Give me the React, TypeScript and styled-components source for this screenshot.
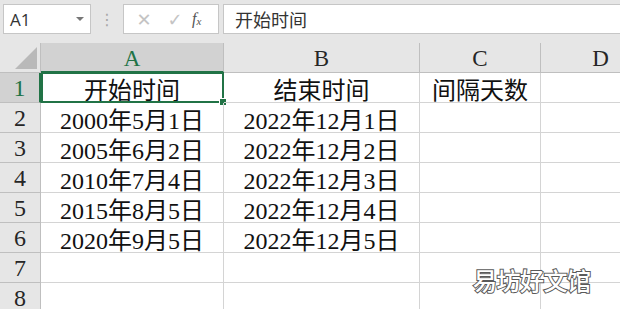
import styled, { createGlobalStyle } from "styled-components";

const GREEN = "#217346";
const COLS = ["A", "B", "C", "D"];
const WIDTHS = [183, 196, 121, 120];

const rows: string[][] = [
  ["开始时间", "结束时间", "间隔天数", ""],
  ["2000年5月1日", "2022年12月1日", "", ""],
  ["2005年6月2日", "2022年12月2日", "", ""],
  ["2010年7月4日", "2022年12月3日", "", ""],
  ["2015年8月5日", "2022年12月4日", "", ""],
  ["2020年9月5日", "2022年12月5日", "", ""],
  ["", "", "", ""],
  ["", "", "", ""],
];

const GlobalStyle = createGlobalStyle`
  html, body {
    margin: 0;
    padding: 0;
    background: #ffffff;
    overflow: hidden;
  }
`;

export default function App() {
  return (
    <>
      <GlobalStyle />
      <Page>
        <FormulaBar>
          <NameBox>
            <span>A1</span>
            <Caret />
          </NameBox>
          <Dots>⋮</Dots>
          <ActionBox>
            <Action>✕</Action>
            <Action>✓</Action>
            <Fx>
              f<sub>x</sub>
            </Fx>
          </ActionBox>
          <FormulaInput>开始时间</FormulaInput>
        </FormulaBar>
        <Sheet>
          <Corner />
          {COLS.map((c, i) => (
            <ColHeader key={c} $active={i === 0}>
              {c}
            </ColHeader>
          ))}
          {rows.map((row, r) => (
            <Row key={r} row={row} index={r} />
          ))}
        </Sheet>
        <Watermark>易坊好文馆</Watermark>
      </Page>
    </>
  );
}

const Row = ({ row, index }: { row: string[]; index: number }) => (
  <>
    <RowHeader $active={index === 0}>{index + 1}</RowHeader>
    {row.map((text, c) => (
      <Cell key={c} $selected={index === 0 && c === 0}>
        {text}
      </Cell>
    ))}
  </>
);

const Page = styled.div`
  position: relative;
  width: 620px;
  height: 309px;
  overflow: hidden;
  background: #e6e6e6;
`;

const FormulaBar = styled.div`
  display: flex;
  align-items: center;
  height: 30px;
  padding: 4px 0 9px 3px;
  gap: 4px;
`;

const Box = styled.div`
  height: 30px;
  box-sizing: border-box;
  background: #ffffff;
  border: 1px solid #c6c6c6;
  display: flex;
  align-items: center;
`;

const NameBox = styled(Box)`
  width: 88px;
  justify-content: space-between;
  padding: 0 6px 0 6px;
  font-family: "Open Sans", "Noto Sans", sans-serif;
  font-size: 17px;
  color: #333333;
`;

const Caret = styled.span`
  width: 0;
  height: 0;
  border-left: 4px solid transparent;
  border-right: 4px solid transparent;
  border-top: 4px solid #777777;
`;

const Dots = styled.div`
  width: 24px;
  text-align: center;
  color: #a6a6a6;
  font-size: 16px;
  font-family: "DejaVu Sans", sans-serif;
`;

const ActionBox = styled(Box)`
  width: 96px;
  justify-content: space-between;
  padding: 0 6px 0 6px;
`;

const Action = styled.span`
  color: #c4c4c4;
  font-size: 18px;
  font-family: "DejaVu Sans", sans-serif;
  width: 28px;
  text-align: center;
`;

const Fx = styled.span`
  font-family: "Liberation Serif", serif;
  font-style: italic;
  font-size: 16px;
  color: #555555;
  width: 20px;
  sub {
    font-size: 11px;
    vertical-align: -1px;
  }
`;

const FormulaInput = styled(Box)`
  flex: 1;
  padding-left: 11px;
  border-right: none;
  font-family: "Noto Sans CJK SC", sans-serif;
  font-size: 18px;
  color: #333333;
`;

const Sheet = styled.div`
  display: grid;
  grid-template-columns: 41px ${WIDTHS.map((w) => `${w}px`).join(" ")};
  grid-template-rows: 30px;
  grid-auto-rows: 30px;
  background: #ffffff;
  font-family: "Liberation Serif", "Noto Sans CJK SC", serif;
`;

const Corner = styled.div`
  position: relative;
  background: #e6e6e6;
  border-right: 1px solid #bfbfbf;
  border-bottom: 1px solid #bfbfbf;
  &::after {
    content: "";
    position: absolute;
    right: 3px;
    bottom: 3px;
    width: 22px;
    height: 22px;
    background: #b9b9b9;
    clip-path: polygon(100% 0, 100% 100%, 0 100%);
  }
`;

const HeaderBase = styled.div<{ $active: boolean }>`
  display: flex;
  align-items: center;
  justify-content: center;
  box-sizing: border-box;
  background: ${({ $active }) => ($active ? "#d2d2d2" : "#e6e6e6")};
  color: ${({ $active }) => ($active ? GREEN : "#262626")};
`;

const ColHeader = styled(HeaderBase)`
  font-size: 23px;
  border-right: 1px solid #bfbfbf;
  border-bottom: ${({ $active }) =>
    $active ? `2px solid ${GREEN}` : "1px solid #bfbfbf"};
  padding-top: 3px;
`;

const RowHeader = styled(HeaderBase)`
  font-size: 24px;
  padding-top: 2px;
  border-right: ${({ $active }) =>
    $active ? `2px solid ${GREEN}` : "1px solid #bfbfbf"};
  border-bottom: 1px solid #bfbfbf;
`;

const Cell = styled.div<{ $selected: boolean }>`
  position: relative;
  display: flex;
  align-items: center;
  justify-content: center;
  box-sizing: border-box;
  border-right: 1px solid #d4d4d4;
  border-bottom: 1px solid #d4d4d4;
  font-size: 24px;
  color: #111111;
  white-space: nowrap;
  padding-top: 2px;

  ${({ $selected }) =>
    $selected &&
    `
    &::before {
      content: "";
      position: absolute;
      left: 0;
      top: -1px;
      right: -1px;
      bottom: -1px;
      border: 2px solid ${GREEN};
      pointer-events: none;
    }
    &::after {
      content: "";
      position: absolute;
      right: -4px;
      bottom: -4px;
      width: 6px;
      height: 6px;
      background: ${GREEN};
      border: 1px solid #ffffff;
    }
  `}
`;

const Watermark = styled.div`
  position: absolute;
  left: 473px;
  top: 262px;
  font-family: "Noto Sans CJK SC", sans-serif;
  font-weight: 500;
  font-size: 24px;
  letter-spacing: -0.5px;
  color: #ffffff;
  -webkit-text-stroke: 2px #5a5a5a;
  paint-order: stroke fill;
`;
